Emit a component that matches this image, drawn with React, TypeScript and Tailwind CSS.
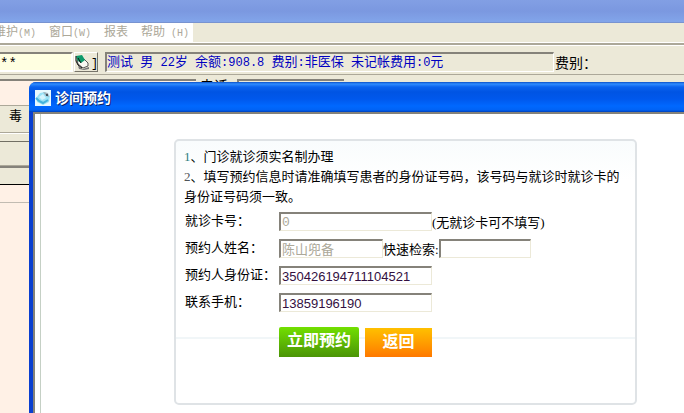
import { useState } from 'react';
import type { InputHTMLAttributes } from 'react';
import clsx from 'clsx';

const MENU_ITEMS = ['维护(M)', '窗口(W)', '报表', '帮助 (H)'];

const NOTICES = [
  { no: '1', text: '、门诊就诊须实名制办理', color: 'text-[#2f7f80]' },
  {
    no: '2',
    text: '、填写预约信息时请准确填写患者的身份证号码，该号码与就诊时就诊卡的身份证号码须一致。',
    color: 'text-[#4f5458]',
  },
];

// Half-width characters are set in a mono face, like the system font of the client
function MixedText({ text, latinClass }: { text: string; latinClass: string }) {
  const parts = text.split(/([\x20-\x7e]+)/).filter(Boolean);
  return (
    <>
      {parts.map((part, i) =>
        /^[\x20-\x7e]+$/.test(part) ? (
          <span key={i} className={clsx("whitespace-pre font-['Liberation_Mono',monospace]", latinClass)}>
            {part}
          </span>
        ) : (
          part
        )
      )}
    </>
  );
}

function SunkenInput({ className, ...props }: InputHTMLAttributes<HTMLInputElement>) {
  return (
    <input
      className={clsx(
        'h-[19px] min-w-0 border border-t-2 border-l-2 border-t-[#85827a] border-l-[#85827a] border-r-[#ece9d8] border-b-[#ece9d8] bg-white px-px text-[13px] leading-[15px] outline-none',
        className
      )}
      {...props}
    />
  );
}

function CardIcon() {
  return (
    <svg width="16" height="16" viewBox="0 0 16 16" className="shrink-0" aria-hidden="true">
      <path d="M3 12 L8 15 L14 13 L14 15 L9 16 L4 15Z" fill="#777" />
      <path d="M2 6 L6 8 L9 5 L13 9 L13 12 L8 14 L3 10Z" fill="#f8f8f2" stroke="#555" strokeWidth="1" />
      <path d="M1 2 L7 1 L10 6 L6 9 L2 6Z" fill="#0d9a6a" />
      <path d="M1 2 L1 7 L3 11 L7 14" fill="none" stroke="#111" strokeWidth="1" />
      <path d="M3 4 L6 9" stroke="#111" strokeWidth="1" />
    </svg>
  );
}

function AppIcon() {
  return (
    <svg width="16" height="16" viewBox="0 0 16 16" className="shrink-0" aria-hidden="true">
      <rect width="16" height="16" fill="#e8f9ff" />
      <path d="M1 8 L5 3 L10 2 L15 6 L14 12 L8 15 L2 12Z" fill="#9ae2f6" />
      <path d="M1 8 L4 11 L8 13 L13 10" fill="none" stroke="#45b4dc" strokeWidth="2" />
      <path d="M4 7 L8 4 L11 8 L7 10Z" fill="#d4f4fd" />
      <path d="M8 2 L13 3 L14 7 L11 6Z" fill="#9fb0ba" />
      <circle cx="12" cy="5" r="1" fill="#27343f" />
    </svg>
  );
}

function MainWindow() {
  return (
    <div className="flex h-full flex-col bg-[#ece9d8]">
      <div className="h-[23px] shrink-0 bg-linear-to-b from-[#829fe4] via-[#7b98e0] to-[#82a5ea] border-b border-[#7893d0]" />

      {/* Menu bar */}
      <nav className="flex h-[19px] shrink-0">
        <div className="-ml-[6px] flex w-[199px] gap-[13px] overflow-hidden bg-white text-[12px] leading-[17px] text-[#aca899]">
          {MENU_ITEMS.map((item) => (
            <button key={item} className="shrink-0 whitespace-nowrap">
              <MixedText text={item} latinClass="text-[10px]" />
            </button>
          ))}
        </div>
      </nav>
      <div className="h-[4px] shrink-0 border-y border-white bg-[#aca899]" />

      {/* Patient bar */}
      <div className="flex h-[29px] shrink-0 items-start border-b border-[#aca899] pt-[6px]">
        <input
          aria-label="密码"
          defaultValue="**"
          className="h-5 w-[73px] border-t-2 border-r-2 border-b-2 border-t-[#85827a] border-r-white border-b-white bg-[#ffffe1] pt-1 font-['Liberation_Mono',monospace] text-[14px] leading-none text-black outline-none"
        />
        <button
          aria-label="读卡"
          className="ml-px flex h-5 w-6 items-center overflow-hidden border border-t-white border-l-white border-r-[#77746a] border-b-[#77746a] text-[12px] leading-none"
        >
          <CardIcon />
          <span className="pt-1 font-['Liberation_Mono',monospace]">]</span>
        </button>
        <div className="ml-[7px] h-5 w-[449px] min-w-0 shrink overflow-hidden whitespace-nowrap border border-t-2 border-l-2 border-t-[#85827a] border-l-[#85827a] border-r-white border-b-white text-[13px] leading-[15px] text-[#0000c0]">
          <MixedText text="测试 男 22岁 余额:908.8 费别:非医保 未记帐费用:0元" latinClass="text-[12px]" />
        </div>
        <span className="ml-px shrink-0 whitespace-nowrap text-[14px] leading-[22px]">费别：</span>
      </div>

      {/* Second field row, mostly hidden under the dialog */}
      <div className="flex h-[31px] shrink-0 items-start border-b border-[#aca899] pt-[4px]">
        <div className="h-[26px] w-[196px] border-t-2 border-[#85827a] bg-[#fff1e6]" />
        <span className="ml-[4px] text-[14px] leading-[14px]">电话</span>
        <div className="ml-[9px] h-5 w-[107px] border-t-2 border-l-2 border-[#85827a]" />
      </div>
      <div className="h-[27px] shrink-0 border-b border-[#aca899] pl-[9px] text-[13px] leading-[20px]">毒</div>
      <div className="h-[9px] shrink-0 border-t border-b border-t-white border-b-[#716f64]" />
      <div className="h-[24px] shrink-0 border-b border-[#aca899]" />
      <div className="h-[19px] shrink-0 border-t-2 border-b border-t-[#85827a] border-b-black" />
      <div className="h-[18px] shrink-0 border-b border-[#c2bcb2] bg-[#fff1e6]" />
      <div className="flex-1 bg-[#fff1e6]" />
    </div>
  );
}

function BookingForm() {
  const [idNumber, setIdNumber] = useState('350426194711104521');
  const [phone, setPhone] = useState('13859196190');
  const [keyword, setKeyword] = useState('');

  return (
    <form
      onSubmit={(e) => e.preventDefault()}
      className="mr-[47px] ml-[133px] rounded-[5px] border-2 border-[#dfe3e6] bg-linear-to-b from-[#f9fcfd] via-white via-15% to-white text-[13px]"
    >
      <div className="pt-[6px] pr-3 pl-2 leading-[20px]">
        {NOTICES.map(({ no, text, color }) => (
          <p key={no}>
            <span className={clsx("font-['Liberation_Serif',serif]", color)}>{no}</span>
            {text}
          </p>
        ))}
      </div>

      <div className="flex flex-col gap-2 pt-[5px] pl-[9px] leading-[17px]">
        <div className="flex">
          <label htmlFor="card" className="w-[94px] shrink-0">就诊卡号：</label>
          <SunkenInput
            id="card"
            disabled
            defaultValue="0"
            className="w-[153px] font-['Liberation_Mono',monospace] text-[#aca899]"
          />
          <span className="whitespace-nowrap pt-[2px]">
            <span className="font-['Liberation_Serif',serif]">(</span>
            无就诊卡可不填写
            <span className="font-['Liberation_Serif',serif]">)</span>
          </span>
        </div>
        <div className="flex">
          <label htmlFor="name" className="w-[94px] shrink-0">预约人姓名：</label>
          <SunkenInput id="name" disabled defaultValue="陈山兜备" className="w-[104px] pb-[2px] text-[#aca899]" />
          <label htmlFor="search" className="shrink-0 whitespace-nowrap pt-[2px]">
            快速检索<span className="font-['Liberation_Serif',serif]">:</span>
          </label>
          <SunkenInput
            id="search"
            value={keyword}
            onChange={(e) => setKeyword(e.target.value)}
            className="w-[92px]"
          />
        </div>
        <div className="flex">
          <label htmlFor="idNumber" className="w-[94px] shrink-0">预约人身份证：</label>
          <SunkenInput
            id="idNumber"
            value={idNumber}
            onChange={(e) => setIdNumber(e.target.value)}
            className="w-[153px] font-['Liberation_Sans',sans-serif] text-[#33103f]"
          />
        </div>
        <div className="flex">
          <label htmlFor="phone" className="w-[94px] shrink-0">联系手机：</label>
          <SunkenInput
            id="phone"
            value={phone}
            onChange={(e) => setPhone(e.target.value)}
            className="w-[153px] font-['Liberation_Sans',sans-serif] text-[#33103f]"
          />
        </div>
      </div>

      <div className="mt-[15px] bg-[linear-gradient(to_bottom,transparent_10px,#f1f6f8_10px,#f1f6f8_12px,transparent_12px)] pb-[46px] pl-[103px]">
        <div className="flex items-end gap-[6px] text-[16px] font-bold text-white">
          <button
            type="submit"
            className="h-[30px] w-[80px] rounded-t-[2px] bg-linear-to-b from-[#72e000] to-[#4b9406] pb-[2px] leading-none"
          >
            立即预约
          </button>
          <button
            type="button"
            className="h-[29px] w-[67px] bg-linear-to-b from-[#ffc000] to-[#ff7800] pb-[2px] leading-none"
          >
            返回
          </button>
        </div>
      </div>
    </form>
  );
}

export default function App() {
  return (
    <div className="relative h-screen overflow-hidden font-['Liberation_Sans','Noto_Sans_CJK_SC',sans-serif] text-black">
      <MainWindow />

      <div
        role="dialog"
        aria-labelledby="dialog-title"
        className="absolute top-[82px] right-0 bottom-0 left-[29px] flex flex-col overflow-hidden rounded-tl-[7px] bg-[#0a54e0]"
      >
        <header className="flex h-[30px] shrink-0 items-center gap-1 bg-[linear-gradient(to_bottom,#0a50c8_0,#2f8cff_2px,#0a62ee_5px,#0054e3_10px,#0058ec_17px,#0068ff_24px,#0062f5_28px,#0040b8_30px)] pt-[2px] pl-[6px]">
          <AppIcon />
          <h1 id="dialog-title" className="text-[14px] leading-[18px] font-bold text-white [text-shadow:1px_1px_0_#0a246a]">
            诊间预约
          </h1>
        </header>
        <div className="flex min-h-0 flex-1 border-l-4 border-[#0a3fd0]">
          <div className="w-full border-t-2 border-l-2 border-t-[#85827a] border-l-[#85827a] bg-white pl-[5px]">
            <div className="h-full border-l border-[#c5d0c5] pt-[25px]">
              <BookingForm />
            </div>
          </div>
        </div>
      </div>
    </div>
  );
}
